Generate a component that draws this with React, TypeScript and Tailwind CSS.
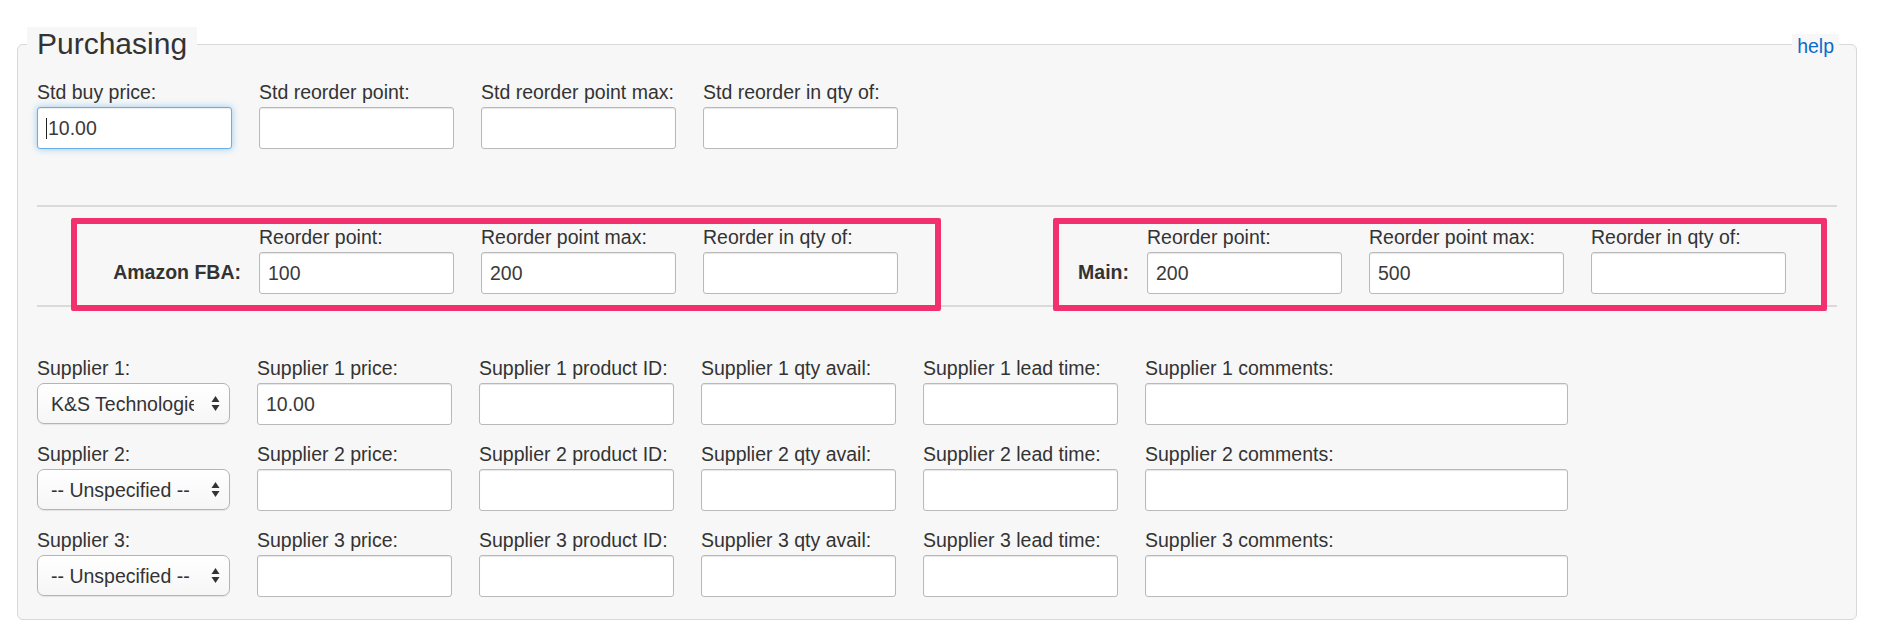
import React from "react";

const inputBase =
  "h-[42px] bg-white border border-[#b9b9b9] rounded-[3px] shadow-[inset_0_1px_1px_rgba(0,0,0,0.1)] px-[8px] text-[19.5px] text-[#3a3a3a] outline-none";

function TextInput({ value = "", width = "w-[195px]" }: { value?: string; width?: string }) {
  return <input readOnly defaultValue={value} className={`${inputBase} ${width}`} />;
}

function Field({
  label,
  value,
  width = "w-[195px]",
}: {
  label: string;
  value?: string;
  width?: string;
}) {
  return (
    <div className="flex flex-col">
      <label className="leading-[24px] mb-[3px] text-[19.5px] text-[#333] whitespace-nowrap">{label}</label>
      <TextInput value={value} width={width} />
    </div>
  );
}

function FocusedField({ label, value }: { label: string; value: string }) {
  return (
    <div className="flex flex-col">
      <label className="leading-[24px] mb-[3px] text-[19.5px] text-[#333] whitespace-nowrap">{label}</label>
      <div className="relative">
        <input
          readOnly
          defaultValue={value}
          className="h-[42px] w-[195px] bg-white border border-[#66afe9] rounded-[3px] shadow-[inset_0_1px_1px_rgba(0,0,0,0.075),0_0_7px_rgba(102,175,233,0.65)] pl-[10px] pr-[8px] text-[19.5px] text-[#3a3a3a] outline-none"
        />
        <span className="absolute left-[9px] top-[11px] w-[1px] h-[21px] bg-[#222]" />
      </div>
    </div>
  );
}

function Arrows() {
  return (
    <svg width="9" height="17" viewBox="0 0 9 17" className="shrink-0">
      <path d="M4.5 1 L8.5 7 L0.5 7 Z" fill="#333" />
      <path d="M4.5 16 L8.5 10 L0.5 10 Z" fill="#333" />
    </svg>
  );
}

function SelectField({ label, value }: { label: string; value: string }) {
  return (
    <div className="flex flex-col">
      <label className="leading-[24px] mb-[3px] text-[19.5px] text-[#333] whitespace-nowrap">{label}</label>
      <div className="h-[41px] w-[193px] flex items-center pl-[13px] rounded-[7px] border border-[#b4b4b4] bg-gradient-to-b from-white to-[#f6f6f6] shadow-[0_1px_1px_rgba(0,0,0,0.08)]">
        <span className="w-[143px] flex-none overflow-hidden whitespace-nowrap text-[19.5px] text-[#333] leading-[24px]">
          {value}
        </span>
        <span className="ml-[17px] flex items-center">
          <Arrows />
        </span>
      </div>
    </div>
  );
}

function BoldCell({ text }: { text: string }) {
  return (
    <div className="w-[195px] flex justify-end items-center h-[42px] self-end">
      <span className="mr-[-9px] text-[19.5px] font-bold text-[#333] whitespace-nowrap">{text}</span>
    </div>
  );
}

export default function App() {
  const suppliers = [
    { n: 1, sel: "K&S Technologies", price: "10.00" },
    { n: 2, sel: "-- Unspecified --", price: "" },
    { n: 3, sel: "-- Unspecified --", price: "" },
  ];
  return (
    <div
      className="w-[1884px] h-[642px] bg-white pt-[27px] pl-[17px]"
      style={{ fontFamily: '"Liberation Sans", Arial, Helvetica, sans-serif' }}
    >
      <fieldset className="relative w-[1840px] border border-[#d9d9d9] rounded-[6px] bg-[#f7f7f7] px-[19px] pb-[22px]">
        <legend className="ml-[-10px] px-[10px] bg-[#f7f7f7] text-[30px] leading-[34px] text-[#333]">Purchasing</legend>
        <a className="absolute right-[17px] top-[-27px] px-[5px] bg-[#f7f7f7] text-[19.5px] leading-[24px] text-[#0b6bcb]">
          help
        </a>

        {/* Standard row */}
        <div className="flex gap-[27px] mt-[19px]">
          <FocusedField label="Std buy price:" value="10.00" />
          <Field label="Std reorder point:" />
          <Field label="Std reorder point max:" />
          <Field label="Std reorder in qty of:" />
        </div>

        <div className="h-[2px] bg-[#dadada] mt-[56px]" />

        {/* Location reorder row */}
        <div className="relative">
          <div className="flex gap-[27px] pt-[18px]">
            <BoldCell text="Amazon FBA:" />
            <Field label="Reorder point:" value="100" />
            <Field label="Reorder point max:" value="200" />
            <Field label="Reorder in qty of:" />
            <BoldCell text="Main:" />
            <Field label="Reorder point:" value="200" />
            <Field label="Reorder point max:" value="500" />
            <Field label="Reorder in qty of:" />
          </div>
          <div className="h-[2px] bg-[#dadada] mt-[11px]" />
          <div className="absolute left-[34px] top-[11px] w-[870px] h-[93px] border-[6px] border-[#f2306e] rounded-[2px]" />
          <div className="absolute left-[1016px] top-[11px] w-[774px] h-[93px] border-[6px] border-[#f2306e] rounded-[2px]" />
        </div>

        {/* Suppliers */}
        <div className="flex flex-col gap-[17px] mt-[49px]">
          {suppliers.map((s) => (
            <div key={s.n} className="flex gap-[27px]">
              <SelectField label={`Supplier ${s.n}:`} value={s.sel} />
              <Field label={`Supplier ${s.n} price:`} value={s.price} />
              <Field label={`Supplier ${s.n} product ID:`} />
              <Field label={`Supplier ${s.n} qty avail:`} />
              <Field label={`Supplier ${s.n} lead time:`} />
              <Field label={`Supplier ${s.n} comments:`} width="w-[423px]" />
            </div>
          ))}
        </div>
      </fieldset>
    </div>
  );
}
